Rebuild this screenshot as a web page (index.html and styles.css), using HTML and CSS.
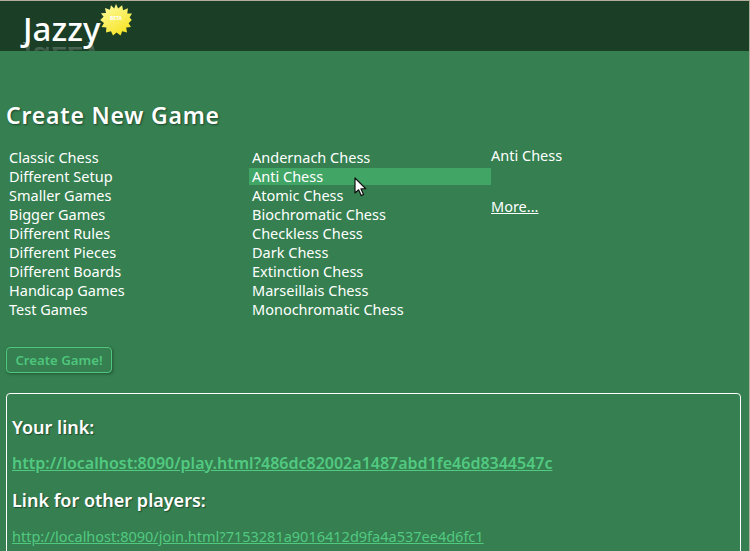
FILE: index.html
```html
<!DOCTYPE html>
<html lang="en">
<head>
<meta charset="utf-8">
<title>Jazzy</title>
<link rel="stylesheet" href="styles.css">
</head>
<body>
<header class="topbar">
  <div class="logo">
    <span class="logo-word">Jazzy</span>
    <span class="logo-reflection" aria-hidden="true">Jazzy</span>
    <span class="beta">
      <svg class="star" viewBox="0 0 32 32" width="32" height="32">
        <defs>
          <linearGradient id="starfill" x1="0.2" y1="0" x2="0.8" y2="1">
            <stop offset="0" stop-color="#fdfb9a"/>
            <stop offset="1" stop-color="#f5e21e"/>
          </linearGradient>
        </defs>
        <polygon fill="url(#starfill)" points="16,0 18.2,4.6 22.1,1.2 23.1,6.2 27.9,4.3 27.3,9.4 32,9.5 29.6,13.6 31.8,16 28.6,19.3 31,23 26.2,23.6 27,28.6 22.2,27.2 20.6,31.6 16.6,28.6 13,31.6 11,27.2 6,28.6 6.4,23.6 1.6,23 4,19 0.2,16 3.6,12.8 1,9.3 6,8.9 5,4 9.9,5.8 11,1.2 14.2,4.4"/>
      </svg>
      <span class="beta-text">BETA</span>
    </span>
  </div>
</header>
<main class="page">
  <h1 class="title">Create New Game</h1>
  <section class="picker">
    <ul class="list">
      <li>Classic Chess</li>
      <li>Different Setup</li>
      <li>Smaller Games</li>
      <li>Bigger Games</li>
      <li>Different Rules</li>
      <li>Different Pieces</li>
      <li>Different Boards</li>
      <li>Handicap Games</li>
      <li>Test Games</li>
    </ul>
    <ul class="list">
      <li>Andernach Chess</li>
      <li class="selected">Anti Chess
        <svg class="cursor" viewBox="0 0 14 21" width="14" height="21">
          <path d="M1 1 L1 16 L4.6 12.8 L7.2 18.6 L9.6 17.5 L7 11.9 L11.8 11.7 Z" fill="#fff" stroke="#111" stroke-width="1.2" stroke-linejoin="round"/>
        </svg>
      </li>
      <li>Atomic Chess</li>
      <li>Biochromatic Chess</li>
      <li>Checkless Chess</li>
      <li>Dark Chess</li>
      <li>Extinction Chess</li>
      <li>Marseillais Chess</li>
      <li>Monochromatic Chess</li>
    </ul>
    <div class="detail">
      <div class="detail-name">Anti Chess</div>
      <a class="more" href="#">More...</a>
    </div>
  </section>
  <button class="create" type="button">Create Game!</button>
  <section class="links">
    <h2 class="link-head">Your link:</h2>
    <a class="link link-bold" href="#">http://localhost:8090/play.html?486dc82002a1487abd1fe46d8344547c</a>
    <h2 class="link-head">Link for other players:</h2>
    <a class="link" href="#">http://localhost:8090/join.html?7153281a9016412d9fa4a537ee4d6fc1</a>
  </section>
</main>
</body>
</html>
```
FILE: styles.css
```css
html, body {
  margin: 0;
  height: 551px;
  overflow: hidden;
}
body {
  background: #357f50;
  color: #fff;
  font-family: "Noto Sans", "Open Sans", sans-serif;
  font-size: 14.5px;
  border-top: 1px solid #b5ad9c;
  border-right: 1px solid #b5ad9c;
  box-sizing: border-box;
}
.topbar {
  height: 50px;
  background: #1a3f26;
  overflow: hidden;
}
.logo {
  position: relative;
  height: 50px;
  width: 140px;
}
.logo-word, .logo-reflection {
  position: absolute;
  left: 23px;
  font-size: 33px;
  font-weight: 500;
  line-height: 34px;
}
.logo-word { top: 11px; }
.logo-reflection {
  top: 41px;
  transform: scaleY(-1);
  opacity: 0.35;
  -webkit-mask-image: linear-gradient(to top, #000, transparent 40%);
  mask-image: linear-gradient(to top, #000, transparent 40%);
}
.beta {
  position: absolute;
  left: 100px;
  top: 3px;
  width: 32px;
  height: 32px;
}
.star { display: block; }
.beta-text {
  position: absolute;
  left: 0;
  right: 0;
  top: 11px;
  text-align: center;
  font-size: 5px;
  line-height: 7px;
  font-weight: 700;
  color: #fff;
}
.page {
  height: 500px;
  overflow: hidden;
  padding: 0 8px 0 6px;
}
.title {
  margin: 0;
  padding-top: 49px;
  font-size: 23px;
  line-height: 30px;
  font-weight: 600;
  letter-spacing: 0.8px;
  text-shadow: 1px 1px 2px rgba(0, 0, 0, 0.45);
}
.picker {
  display: grid;
  grid-template-columns: 243px 242px 1fr;
  margin-top: 19px;
}
.list {
  list-style: none;
  margin: 0;
  padding: 0;
  display: flex;
  flex-direction: column;
  gap: 2px;
}
.list li {
  position: relative;
  height: 17px;
  line-height: 17px;
  padding-left: 3px;
}
.selected { background: #41a566; }
.cursor {
  position: absolute;
  left: 105px;
  top: 9px;
}
.detail-name {
  line-height: 17px;
  margin-top: -2px;
}
.more {
  display: inline-block;
  margin-top: 34px;
  line-height: 17px;
  color: #fff;
}
.create {
  display: block;
  margin-top: 29px;
  width: 106px;
  height: 26px;
  padding: 0;
  border: 1px solid #4fc57d;
  border-radius: 4px;
  background: #357f50;
  color: #4fc57d;
  font-family: inherit;
  font-size: 13.2px;
  font-weight: 600;
  box-shadow: 1px 1px 3px rgba(0, 0, 0, 0.35);
}
.links {
  margin-top: 20px;
  height: 170px;
  box-sizing: border-box;
  padding: 0 5px;
  border: 1px solid #fff;
  border-radius: 4px;
}
.link-head {
  margin: 0;
  font-size: 18px;
  line-height: 24px;
  font-weight: 600;
  text-shadow: 1px 1px 1px rgba(0, 0, 0, 0.4);
}
.links > .link-head:first-child { margin-top: 21px; }
.link {
  display: block;
  margin: 14px 0 15px;
  color: #52c981;
  line-height: 20px;
}
.link-bold {
  font-size: 16px;
  font-weight: 600;
}
```
